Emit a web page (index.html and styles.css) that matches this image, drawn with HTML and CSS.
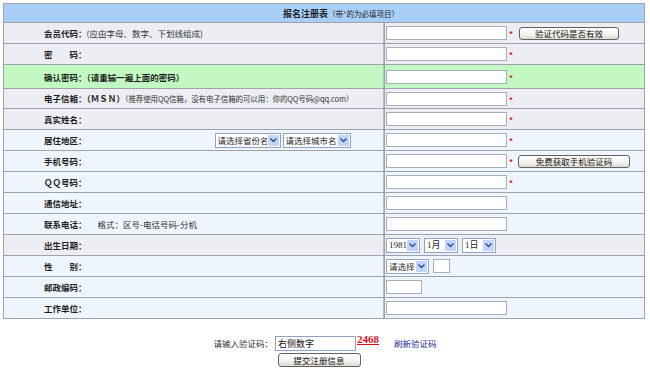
FILE: index.html
```html
<!DOCTYPE html>
<html lang="zh-CN">
<head>
    <meta charset="UTF-8">
    <title>报名注册表</title>
    <link rel="stylesheet" href="styles.css">
</head>
<body>
    <table class="reg">
        <tr class="head">
            <td colspan="2"><b>报名注册表</b><span class="note">（带<em>*</em>的为必填项目）</span></td>
        </tr>
        <tr class="grey">
            <td class="lbl"><b>会员代码：</b><span class="tip">(应由字母、数字、下划线组成)</span></td>
            <td><div class="fld"><input type="text" class="txt"><i class="req">*</i><button class="btn btn-check">验证代码是否有效</button></div></td>
        </tr>
        <tr class="grey">
            <td class="lbl"><b>密　　码：</b></td>
            <td><div class="fld"><input type="password" class="txt"><i class="req">*</i></div></td>
        </tr>
        <tr class="green">
            <td class="lbl"><b>确认密码：（请重输一遍上面的密码）</b></td>
            <td><div class="fld"><input type="password" class="txt"><i class="req">*</i></div></td>
        </tr>
        <tr class="grey short">
            <td class="lbl"><b>电子信箱：（ＭＳＮ）</b><span class="tip tip-sm">（推荐使用QQ信箱，没有电子信箱的可以用：你的QQ号码@qq.com）</span></td>
            <td><div class="fld"><input type="text" class="txt"><i class="req">*</i></div></td>
        </tr>
        <tr class="grey">
            <td class="lbl"><b>真实姓名：</b></td>
            <td><div class="fld"><input type="text" class="txt"><i class="req">*</i></div></td>
        </tr>
        <tr class="blue">
            <td class="lbl">
                <div class="area">
                    <b>居住地区：</b>
                    <span class="sels">
                        <span class="sel w-prov"><select><option>请选择省份名</option></select><span class="arr"><svg width="7" height="5" viewBox="0 0 7 5"><path d="M0.5 0.5 L3.5 3.5 L6.5 0.5" fill="none" stroke="#2a4aa8" stroke-width="1.4"/></svg></span></span>
                        <span class="sel w-city"><select><option>请选择城市名</option></select><span class="arr"><svg width="7" height="5" viewBox="0 0 7 5"><path d="M0.5 0.5 L3.5 3.5 L6.5 0.5" fill="none" stroke="#2a4aa8" stroke-width="1.4"/></svg></span></span>
                    </span>
                </div>
            </td>
            <td><div class="fld"><input type="text" class="txt"><i class="req">*</i></div></td>
        </tr>
        <tr class="blue">
            <td class="lbl"><b>手机号码：</b></td>
            <td><div class="fld"><input type="text" class="txt"><i class="req">*</i><button class="btn btn-sms">免费获取手机验证码</button></div></td>
        </tr>
        <tr class="blue">
            <td class="lbl"><b>ＱＱ号码：</b></td>
            <td><div class="fld"><input type="text" class="txt"><i class="req">*</i></div></td>
        </tr>
        <tr class="blue">
            <td class="lbl"><b>通信地址：</b></td>
            <td><div class="fld"><input type="text" class="txt"></div></td>
        </tr>
        <tr class="blue">
            <td class="lbl"><b>联系电话：</b><span class="fmt">格式：区号-电话号码-分机</span></td>
            <td><div class="fld"><input type="text" class="txt"></div></td>
        </tr>
        <tr class="grey">
            <td class="lbl"><b>出生日期：</b></td>
            <td>
                <div class="fld">
                    <span class="sel date"><select><option>1981</option></select><span class="arr"><svg width="7" height="5" viewBox="0 0 7 5"><path d="M0.5 0.5 L3.5 3.5 L6.5 0.5" fill="none" stroke="#2a4aa8" stroke-width="1.4"/></svg></span></span>
                    <span class="sel date"><select><option>1月</option></select><span class="arr"><svg width="7" height="5" viewBox="0 0 7 5"><path d="M0.5 0.5 L3.5 3.5 L6.5 0.5" fill="none" stroke="#2a4aa8" stroke-width="1.4"/></svg></span></span>
                    <span class="sel date"><select><option>1日</option></select><span class="arr"><svg width="7" height="5" viewBox="0 0 7 5"><path d="M0.5 0.5 L3.5 3.5 L6.5 0.5" fill="none" stroke="#2a4aa8" stroke-width="1.4"/></svg></span></span>
                </div>
            </td>
        </tr>
        <tr class="blue">
            <td class="lbl"><b>性　　别：</b></td>
            <td>
                <div class="fld">
                    <span class="sel sex"><select><option>请选择</option></select><span class="arr"><svg width="7" height="5" viewBox="0 0 7 5"><path d="M0.5 0.5 L3.5 3.5 L6.5 0.5" fill="none" stroke="#2a4aa8" stroke-width="1.4"/></svg></span></span>
                    <input type="text" class="txt tiny">
                </div>
            </td>
        </tr>
        <tr class="blue">
            <td class="lbl"><b>邮政编码：</b></td>
            <td><div class="fld"><input type="text" class="txt zip"></div></td>
        </tr>
        <tr class="blue">
            <td class="lbl"><b>工作单位：</b></td>
            <td><div class="fld"><input type="text" class="txt"></div></td>
        </tr>
    </table>

    <div class="bottom">
        <div class="code-line">
            <span class="code-lbl">请输入验证码：</span>
            <input type="text" class="code-input" value="右侧数字">
            <span class="code">2468</span>
            <a href="#" class="refresh">刷新验证码</a>
        </div>
        <div class="submit-line">
            <button class="btn btn-submit">提交注册信息</button>
        </div>
    </div>
</body>
</html>
```

FILE: styles.css
```css
body { margin: 0; padding: 3px 5px 0 3px; font-family: "Noto Sans CJK SC", sans-serif; font-size: 8.5px; line-height: 12px; color: #1e1e1e; background: #fff; }

.reg { width: 642px; border-spacing: 1px; background: #9da2ad; }
.reg td { height: 20px; padding: 0; vertical-align: middle; white-space: nowrap; }
.reg td.lbl { width: 339px; padding-left: 40px; border-right: 1px solid #b8bcc6; }
.reg td + td { padding-left: 1px; }

.head td { height: 18px; background: #a8cff8; text-align: center; padding-left: 34px; }
.head b { font-size: 9px; }
.note { font-size: 7.5px; }
.note em { font-style: normal; color: #e0101a; }

.grey td { background: #eceef3; }
.blue td { background: #eef5fd; }
.green td { height: 23px; background: #c2f9c2; }
.short td { height: 19px; }

.tip { color: #333; }
.tip-sm { font-size: 7.5px; letter-spacing: -0.1px; }
.fmt { margin-left: 11px; color: #333; }

.area { display: flex; align-items: center; }
.sels { display: flex; gap: 2px; margin-left: 128px; }

.fld { display: flex; align-items: center; }
.txt { box-sizing: border-box; width: 121px; height: 14px; margin: 0; padding: 0 2px; border: 1px solid #a7afbb; background: #fff; font: inherit; }
.txt.tiny { width: 17px; height: 14px; margin-left: 4px; }
.txt.zip { width: 36px; }
.req { align-self: flex-end; margin: 0 0 2px 2px; font-style: normal; font-weight: bold; font-size: 8px; line-height: 8px; color: #e0101a; }

.btn { box-sizing: border-box; margin: 0; padding: 0; border: 1px solid #5e6166; border-radius: 3px; background: linear-gradient(#ffffff, #f3f2ec 60%, #dcdbd2); font: inherit; color: #111; line-height: 11px; }
.btn-check { width: 100px; height: 13px; margin-left: 6px; }
.btn-sms { width: 112px; height: 13px; margin-left: 5px; }
.btn-submit { width: 83px; height: 14px; }

.sel { box-sizing: border-box; display: inline-flex; align-items: stretch; height: 15px; border: 1px solid #8fa4c4; background: #fff; }
.sel select { appearance: none; -webkit-appearance: none; flex: 1; min-width: 0; margin: 0; padding: 0 0 0 2px; border: 0; background: transparent; font: inherit; color: #1e1e1e; }
.arr { width: 11px; margin: 1px; display: flex; align-items: center; justify-content: center; background: #c3d4fb; }
.w-prov { width: 66px; }
.w-city { width: 68px; }
.sel.date { width: 34px; margin-right: 4px; font-family: "Liberation Serif", "Noto Sans CJK SC", serif; font-size: 9px; }
.sel.date:last-child { margin-right: 0; }
.sel.sex { width: 43px; }

.bottom { padding-top: 16px; }
.code-line { display: flex; align-items: center; justify-content: center; padding-left: 2px; height: 16px; }
.code-lbl { color: #333; }
.code-input { box-sizing: border-box; width: 81px; height: 15px; margin: 0 1px 0 2px; padding: 0 2px; border: 1px solid #8fa4c4; font: inherit; font-size: 9px; color: #111; }
.code { align-self: flex-start; font-family: "Liberation Serif", serif; font-weight: bold; font-size: 11px; line-height: 9px; color: #e0101a; text-decoration: underline; }
.refresh { margin-left: 15px; color: #1c2aa0; text-decoration: none; }
.submit-line { display: flex; justify-content: center; padding: 2px 10px 0 0; }
```
